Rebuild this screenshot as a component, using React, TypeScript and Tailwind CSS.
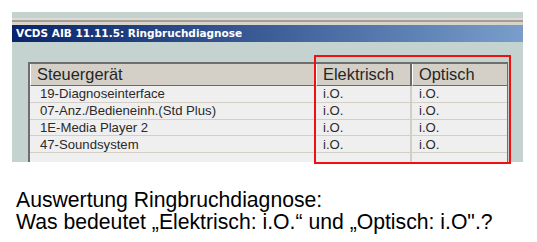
import React from "react";

const ROWS = [
  ["19-Diagnoseinterface", "i.O.", "i.O."],
  ["07-Anz./Bedieneinh.(Std Plus)", "i.O.", "i.O."],
  ["1E-Media Player 2", "i.O.", "i.O."],
  ["47-Soundsystem", "i.O.", "i.O."],
  ["", "", ""],
];

export default function App() {
  return (
    <div className="relative w-[537px] h-[242px] bg-white overflow-hidden font-['Liberation_Sans',Arial,sans-serif]">
      {/* cut-off heading above the screenshot */}
      <div className="h-[12px] overflow-hidden">
        <div className="-mt-[18px] pl-[278px] text-[21px] leading-[21px] text-[#2233a8] tracking-[2px]">
          AIB 11.11.5
        </div>
      </div>

      {/* screenshot of the VCDS window */}
      <div className="ml-[12px] w-[511px] h-[150px] bg-[#c4d2d0] overflow-hidden flex flex-col">
        <div className="h-[6px] bg-[#c4d2cf]" />
        <div className="h-[2px] bg-[#dfdbd4]" />
        <div className="h-[2px] bg-[#a29e96]" />
        <div className="h-[3px] bg-[#d8d4cc]" />
        <div className="h-[17px] bg-gradient-to-r from-[#0a246a] via-[#3d5d98] to-[#7a9ecb] flex items-center pl-[4px]">
          <span className="text-white font-bold text-[10.5px] font-['DejaVu_Sans',sans-serif] leading-none">
            VCDS AIB 11.11.5: Ringbruchdiagnose
          </span>
        </div>

        <div className="pt-[20px] pl-[16px]">
          <div className="w-[480px] h-[100px] overflow-hidden border-l-2 border-t-2 border-r border-[#6e6e6e] bg-[#efefef]">
            {/* header */}
            <div className="flex h-[22px] bg-[#d4d0c8] text-[16.4px] text-[#262626] leading-none">
              <div className="w-[286px] border-r-2 border-b border-[#6a6a6a] border-l border-l-white flex items-center pl-[6px]">
                Steuergerät
              </div>
              <div className="w-[96px] border-r-2 border-b border-[#6a6a6a] border-l border-l-white flex items-center pl-[6px]">
                Elektrisch
              </div>
              <div className="w-[95px] border-b border-[#6a6a6a] border-l border-l-white flex items-center pl-[6px]">
                Optisch
              </div>
            </div>
            {/* rows */}
            {ROWS.map((r, i) => (
              <div
                key={i}
                className="flex h-[16.75px] border-b border-[#d3cfc7] text-[13.15px] text-[#2a2a2a] leading-none"
              >
                <div className="w-[286px] border-r-2 border-[#d3cfc7] flex items-center pl-[10px]">{r[0]}</div>
                <div className="w-[96px] border-r-2 border-[#d3cfc7] flex items-center pl-[7px]">{r[1]}</div>
                <div className="w-[95px] flex items-center pl-[7px]">{r[2]}</div>
              </div>
            ))}
          </div>
        </div>
      </div>

      {/* red annotation frame */}
      <div className="absolute left-[314px] top-[55px] w-[197px] h-[109px] border-2 border-[#f01010] pointer-events-none" />

      {/* question */}
      <div className="mt-[27px] pl-[16px] text-[21.2px] leading-[21.5px] text-black">
        <div>Auswertung Ringbruchdiagnose:</div>
        <div>Was bedeutet „Elektrisch: i.O.“ und „Optisch: i.O".?</div>
      </div>
    </div>
  );
}
